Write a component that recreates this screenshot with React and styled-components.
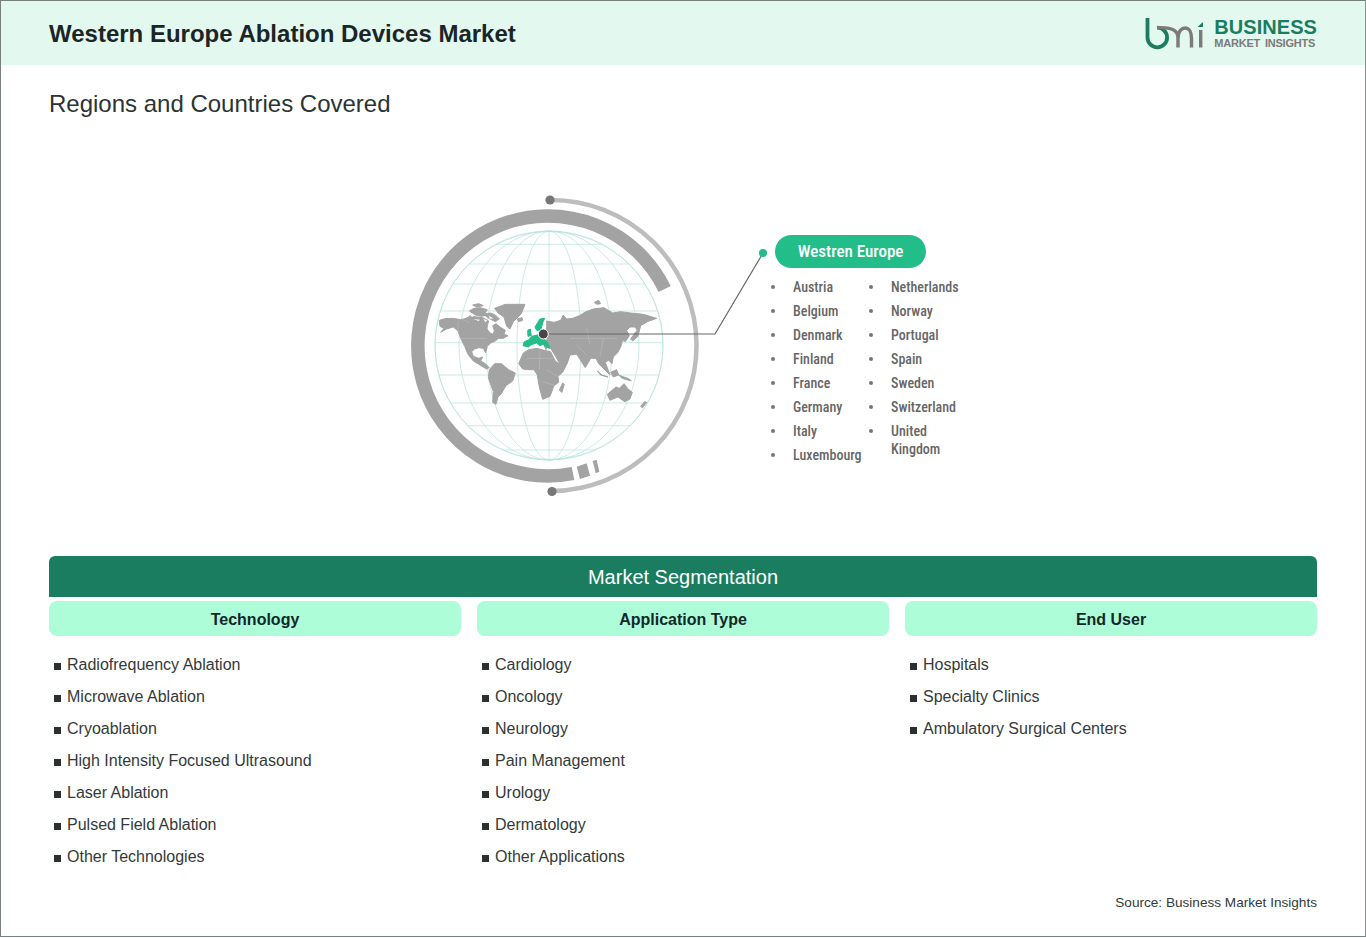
import React from 'react';
import styled, { createGlobalStyle } from 'styled-components';

const GlobalStyle = createGlobalStyle`
  html, body {
    margin: 0;
    padding: 0;
    background: #fff;
    font-family: "Liberation Sans", Arial, sans-serif;
  }
`;

const Page = styled.div`
  box-sizing: border-box;
  width: 1366px;
  height: 937px;
  border: 1px solid #76817f;
  border-right-color: #8a9391;
  display: flex;
  flex-direction: column;
  background: #fff;
`;

const Header = styled.header`
  height: 64px;
  flex: none;
  background: #e3f9ef;
  display: flex;
  align-items: center;
  justify-content: space-between;
  padding: 0 48px;
`;

const Title = styled.h1`
  margin: 2px 0 0;
  font-size: 24px;
  font-weight: 700;
  color: #1c2526;
`;

const Logo = styled.div`
  display: flex;
  align-items: center;
  gap: 10px;
`;

const LogoText = styled.div`
  display: flex;
  flex-direction: column;
  font-weight: 700;
`;

const LogoTop = styled.span`
  font-size: 20px;
  line-height: 19px;
  letter-spacing: 0.05px;
  color: #1b7d5f;
`;

const LogoBottom = styled.span`
  font-size: 11px;
  line-height: 12px;
  letter-spacing: -0.22px;
  word-spacing: 2px;
  color: #7b7b7b;
`;

const Content = styled.main`
  flex: 1;
  display: flex;
  flex-direction: column;
  padding: 0 48px;
`;

const Subtitle = styled.h2`
  margin: 25px 0 0;
  font-size: 24px;
  line-height: 28px;
  font-weight: 400;
  color: #2b3334;
`;

const Diagram = styled.section`
  display: flex;
  margin: 72px 0 0 356px;
  height: 366px;
`;

const Side = styled.div`
  padding-top: 45px;
  font-family: "Roboto", "Liberation Sans", sans-serif;
  font-stretch: 75%;
`;

const Pill = styled.div`
  width: 151px;
  height: 33px;
  margin-left: 5px;
  border-radius: 17px;
  background: #22bd88;
  color: #fff;
  font-size: 17px;
  font-weight: 500;
  line-height: 33px;
  text-align: center;
`;

const Countries = styled.div`
  display: flex;
  margin-top: 10px;
`;

const CountryList = styled.ul`
  list-style: none;
  margin: 0;
  padding: 0;
  width: ${props => props.width}px;
`;

const Country = styled.li`
  position: relative;
  padding-left: 23px;
  margin-bottom: 6px;
  font-size: 14px;
  font-weight: 500;
  line-height: 18px;
  color: #666;
  max-width: 52px;

  &::before {
    content: '';
    position: absolute;
    left: 1px;
    top: 7px;
    width: 4px;
    height: 4px;
    border-radius: 50%;
    background: #777;
  }
`;

const Segmentation = styled.section`
  display: flex;
  flex-direction: column;
`;

const Banner = styled.div`
  height: 41px;
  border-radius: 6px 6px 0 0;
  background: #1b7d5f;
  color: #fff;
  font-size: 20px;
  line-height: 43px;
  text-align: center;
`;

const Columns = styled.div`
  display: grid;
  grid-template-columns: repeat(3, 412px);
  gap: 16px;
  margin-top: 4px;
`;

const ColumnHead = styled.div`
  height: 35px;
  border-radius: 8px;
  background: #adfdd9;
  color: #16272a;
  font-size: 16px;
  font-weight: 700;
  line-height: 38px;
  text-align: center;
`;

const ItemList = styled.ul`
  list-style: none;
  margin: 13px 0 0;
  padding: 0 0 0 5px;
`;

const Item = styled.li`
  height: 32px;
  font-size: 16px;
  line-height: 32px;
  color: #333a3b;
`;

const Square = styled.span`
  display: inline-block;
  width: 7px;
  height: 7px;
  margin-right: 6px;
  background: #2b2f30;
`;

const Source = styled.div`
  margin-top: 22px;
  font-size: 13.6px;
  line-height: 16px;
  text-align: right;
  color: #333a3b;
`;

const parallels = [244.3, 264, 284, 311, 342.7, 375, 403, 425.7, 450];
const meridians = [32, 63, 90, 114];

const BmiMark = () => (
  <svg width="60" height="36" viewBox="1145 15 60 36" aria-hidden="true">
    <path d="M1148.5 18V37.5a9.8 9.8 0 1 0 9.8-9.8" fill="none" stroke="#1b7d5f" strokeWidth="3.8" />
    <path d="M1158 27.7C1172 27 1179 30 1179 38V47.5M1179 38C1179 31 1183 28 1186 28C1190 28 1192.5 32 1192.5 38V47.5" fill="none" stroke="#7b7b7b" strokeWidth="3.4" />
    <path d="M1200 30h3.4v17.5H1200z" fill="#7b7b7b" />
    <path d="M1198.5 27l5.5-5v5z" fill="#1b7d5f" />
  </svg>
);

const Globe = () => (
  <svg width="365" height="310" viewBox="405 190 365 310" aria-hidden="true">
    <g fill="none" stroke="#b5e2db" strokeWidth="0.7">
      <circle cx="549" cy="345.5" r="114" />
      <line x1="549" y1="231" x2="549" y2="460" />
      {meridians.map(rx => (
        <ellipse key={rx} cx="549" cy="345.5" rx={rx} ry="114.5" />
      ))}
      {parallels.map(y => {
        const half = Math.sqrt(114 * 114 - (y - 345.5) * (y - 345.5));
        return <line key={y} x1={549 - half} y1={y} x2={549 + half} y2={y} />;
      })}
    </g>

    <path d="M664.7 289A130 130 0 1 0 573 473.5" fill="none" stroke="#a3a3a3" strokeWidth="13.5" />
    <path d="M576.7 466.7L586.7 463.3L590 475.7L580 479Z" fill="#a3a3a3" />
    <path d="M592.7 461L596.7 459.7L599.3 471.7L595.7 473.3Z" fill="#a3a3a3" />
    <path d="M550 200A145.5 145.5 0 0 1 552 491" fill="none" stroke="#bdbdbd" strokeWidth="4.5" />
    <circle cx="550" cy="200" r="4.6" fill="#777" />
    <circle cx="552" cy="491.5" r="4.6" fill="#777" />

    <g transform="translate(430 295) scale(0.3333)">
      <g fill="#a3a3a3" stroke="#a3a3a3" strokeWidth="3" strokeLinejoin="round">
        {/* north america */}
        <path d="M28 76L45 71L70 70L92 74L108 70L122 62L140 66L158 68L176 78L172 92L171 102L180 114L190 118L193 106L188 92L198 86L210 96L226 106L222 118L234 122L220 130L205 130L196 138L182 144L172 154L167 174L160 160L146 158L134 162L125 170L130 184L146 190L158 186L152 198L166 206L178 218L170 222L150 210L130 198L114 178L104 154L92 130L84 108L70 96L50 102L32 112L42 100L30 94Z" />
        <path d="M118 48L132 40L150 38L172 44L164 56L182 54L196 60L208 72L196 80L180 72L166 62L152 64L136 60Z" />
        <path d="M128 30L146 26L160 32L140 36Z" />
        {/* greenland, iceland */}
        <path d="M194 40L226 28L285 28L274 56L250 80L240 102L230 94L222 66L204 54Z" />
        <path d="M262 72L276 68L278 76L266 80Z" />
        {/* south america */}
        <path d="M178 224L194 206L214 206L236 224L256 234L248 258L228 272L214 296L204 306L198 328L188 322L190 290L175 248Z" />
        {/* africa */}
        <path d="M266 206L280 174L296 164L322 160L342 166L362 170L376 198L392 210L412 204L398 232L384 244L386 262L372 272L360 304L338 313L328 276L322 240L312 224L292 224L278 222Z" />
        <path d="M388 286L398 264L403 268L396 292Z" />
        {/* eurasia */}
        <path d="M362 160L350 156L346 142L352 132L344 118L350 98L350 78L372 82L392 76L400 60L410 72L428 70L448 62L468 50L490 42L522 38L548 54L572 50L602 54L640 58L680 70L652 80L632 92L626 116L616 96L600 96L590 106L598 122L586 140L578 136L572 156L564 172L550 186L546 206L536 196L526 202L532 218L540 240L522 222L506 206L498 190L482 190L466 218L452 196L440 178L420 180L412 204L394 216L378 186Z" />
        <path d="M340 140L352 140L364 152L352 156L348 164L342 150Z" />
        {/* japan, islands, australia, nz */}
        <path d="M616 112L626 104L624 124L608 138L602 132Z" />
        <path d="M494 22L506 16L512 26L500 28Z" />
        <path d="M502 228L516 240L534 246L512 240ZM542 232L560 224L566 240L550 246Z" />
        <path d="M566 240L598 252L604 258L576 250Z" />
        <path d="M532 298L558 276L568 280L582 266L594 282L607 292L600 312L584 320L564 306L540 316Z" />
        <path d="M632 334L644 320L650 322L638 338Z" />
      </g>
      <g fill="none" stroke="#fff" strokeWidth="1.4" opacity="0.35">
        <path d="M84 78L84 108M90 130L170 130M126 170L156 172M96 72L120 84" />
        <path d="M290 190L372 190M330 165L328 225M350 225L385 245M335 260L372 270" />
        <path d="M420 130L560 130M470 100L480 150M520 130L510 185M440 150L470 180" />
      </g>
      <g fill="#fff">
        <path d="M130 72L150 74L146 78ZM160 72L172 76L166 82ZM120 58L132 62L126 66ZM176 62L190 70L180 72Z" />
      </g>
      <path d="M315 96L330 72L344 70L338 84L332 106L320 106ZM293 106L301 102L304 122L294 124ZM279 152L283 140L296 135L305 124L325 119L340 128L354 144L360 160L348 156L340 148L330 152L320 144L302 150L296 156Z" fill="#22bd88" stroke="#22bd88" strokeWidth="3" strokeLinejoin="round" />
    </g>

    <path d="M543 334H715L763 253" fill="none" stroke="#666" strokeWidth="1.2" />
    <circle cx="543.3" cy="334" r="5" fill="#474747" stroke="#fff" strokeWidth="1" />
    <circle cx="763" cy="253" r="4" fill="#22bd88" />
  </svg>
);

const leftCountries = ['Austria', 'Belgium', 'Denmark', 'Finland', 'France', 'Germany', 'Italy', 'Luxembourg'];
const rightCountries = ['Netherlands', 'Norway', 'Portugal', 'Spain', 'Sweden', 'Switzerland', 'United Kingdom'];

const segments = [
  {
    title: 'Technology',
    items: [
      'Radiofrequency Ablation',
      'Microwave Ablation',
      'Cryoablation',
      'High Intensity Focused Ultrasound',
      'Laser Ablation',
      'Pulsed Field Ablation',
      'Other Technologies',
    ],
  },
  {
    title: 'Application Type',
    items: ['Cardiology', 'Oncology', 'Neurology', 'Pain Management', 'Urology', 'Dermatology', 'Other Applications'],
  },
  {
    title: 'End User',
    items: ['Hospitals', 'Specialty Clinics', 'Ambulatory Surgical Centers'],
  },
];

const App = () => (
  <Page>
    <GlobalStyle />
    <Header>
      <Title>Western Europe Ablation Devices Market</Title>
      <Logo>
        <BmiMark />
        <LogoText>
          <LogoTop>BUSINESS</LogoTop>
          <LogoBottom>MARKET INSIGHTS</LogoBottom>
        </LogoText>
      </Logo>
    </Header>
    <Content>
      <Subtitle>Regions and Countries Covered</Subtitle>
      <Diagram>
        <Globe />
        <Side>
          <Pill>Westren Europe</Pill>
          <Countries>
            <CountryList width={98}>
              {leftCountries.map(name => <Country key={name}>{name}</Country>)}
            </CountryList>
            <CountryList width={90}>
              {rightCountries.map(name => <Country key={name}>{name}</Country>)}
            </CountryList>
          </Countries>
        </Side>
      </Diagram>
      <Segmentation>
        <Banner>Market Segmentation</Banner>
        <Columns>
          {segments.map(segment => (
            <div key={segment.title}>
              <ColumnHead>{segment.title}</ColumnHead>
              <ItemList>
                {segment.items.map(item => (
                  <Item key={item}><Square />{item}</Item>
                ))}
              </ItemList>
            </div>
          ))}
        </Columns>
      </Segmentation>
      <Source>Source: Business Market Insights</Source>
    </Content>
  </Page>
);

export default App;
